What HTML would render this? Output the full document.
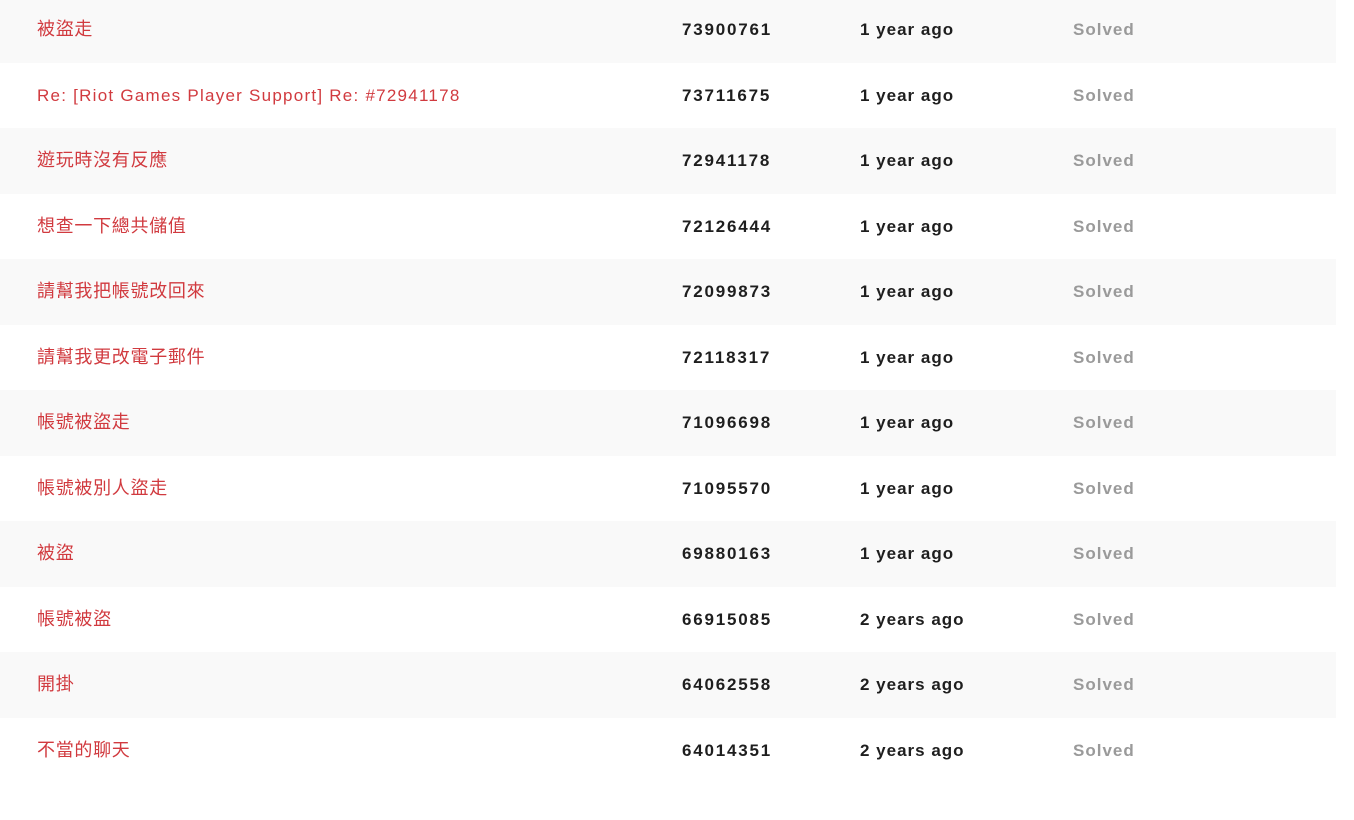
<!DOCTYPE html>
<html><head><meta charset="utf-8"><style>
html,body{margin:0;padding:0;background:#fff;width:1354px;height:820px;overflow:hidden;font-family:"Liberation Sans","Noto Sans CJK TC",sans-serif;}
.r{position:absolute;left:0;width:1336px;height:65.5px;}
.r.g{background:#f9f9f9;}
.r span{position:absolute;top:0;line-height:65.5px;font-size:17px;white-space:nowrap;}
.t{left:37px;color:#d13a3f;font-weight:400;font-size:18px!important;letter-spacing:0.7px;}
.t.l{font-size:17px!important;letter-spacing:1.25px;}
.n{left:682px;color:#1e1e1e;font-weight:700;letter-spacing:1.8px;}
.d{left:860px;color:#1e1e1e;font-weight:700;letter-spacing:1px;}
.s{left:1073px;color:#9a9a9a;font-weight:700;letter-spacing:1px;}
</style></head><body>
<div class="r g" style="top:-3px"><span class="t">被盜走</span><span class="n">73900761</span><span class="d">1 year ago</span><span class="s">Solved</span></div>
<div class="r" style="top:62.5px"><span class="t l">Re: [Riot Games Player Support] Re: #72941178</span><span class="n">73711675</span><span class="d">1 year ago</span><span class="s">Solved</span></div>
<div class="r g" style="top:128px"><span class="t">遊玩時沒有反應</span><span class="n">72941178</span><span class="d">1 year ago</span><span class="s">Solved</span></div>
<div class="r" style="top:193.5px"><span class="t">想查一下總共儲值</span><span class="n">72126444</span><span class="d">1 year ago</span><span class="s">Solved</span></div>
<div class="r g" style="top:259px"><span class="t">請幫我把帳號改回來</span><span class="n">72099873</span><span class="d">1 year ago</span><span class="s">Solved</span></div>
<div class="r" style="top:324.5px"><span class="t">請幫我更改電子郵件</span><span class="n">72118317</span><span class="d">1 year ago</span><span class="s">Solved</span></div>
<div class="r g" style="top:390px"><span class="t">帳號被盜走</span><span class="n">71096698</span><span class="d">1 year ago</span><span class="s">Solved</span></div>
<div class="r" style="top:455.5px"><span class="t">帳號被別人盜走</span><span class="n">71095570</span><span class="d">1 year ago</span><span class="s">Solved</span></div>
<div class="r g" style="top:521px"><span class="t">被盜</span><span class="n">69880163</span><span class="d">1 year ago</span><span class="s">Solved</span></div>
<div class="r" style="top:586.5px"><span class="t">帳號被盜</span><span class="n">66915085</span><span class="d">2 years ago</span><span class="s">Solved</span></div>
<div class="r g" style="top:652px"><span class="t">開掛</span><span class="n">64062558</span><span class="d">2 years ago</span><span class="s">Solved</span></div>
<div class="r" style="top:717.5px"><span class="t">不當的聊天</span><span class="n">64014351</span><span class="d">2 years ago</span><span class="s">Solved</span></div>
</body></html>
